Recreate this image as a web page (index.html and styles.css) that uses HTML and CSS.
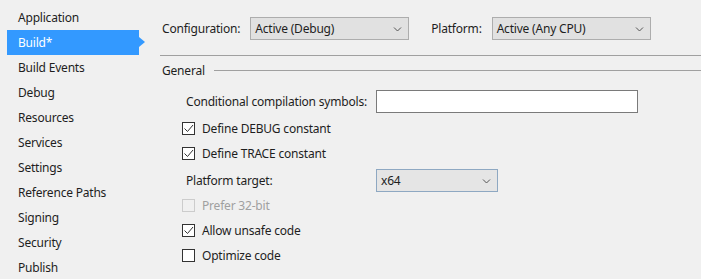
FILE: index.html
```html
<!DOCTYPE html>
<html lang="en">
<head>
    <meta charset="UTF-8">
    <title>Build</title>
    <link rel="stylesheet" href="styles.css">
</head>
<body>

<div class="page">
    <ul class="nav">
        <li>Application</li>
        <li class="active">Build*</li>
        <li>Build Events</li>
        <li>Debug</li>
        <li>Resources</li>
        <li>Services</li>
        <li>Settings</li>
        <li>Reference Paths</li>
        <li>Signing</li>
        <li>Security</li>
        <li>Publish</li>
    </ul>

    <div class="main">
        <div class="top-row">
            <span class="top-label">Configuration:</span>
            <div class="combo">
                <span>Active (Debug)</span>
                <svg class="chev" width="9" height="5" viewBox="0 0 9 5"><path d="M1 0.5 L4.5 4 L8 0.5" fill="none" stroke="#555" stroke-width="1"/></svg>
            </div>
            <span class="top-label platform-label">Platform:</span>
            <div class="combo">
                <span>Active (Any CPU)</span>
                <svg class="chev" width="9" height="5" viewBox="0 0 9 5"><path d="M1 0.5 L4.5 4 L8 0.5" fill="none" stroke="#555" stroke-width="1"/></svg>
            </div>
        </div>

        <div class="rule"></div>

        <div class="group-title">
            <span>General</span>
            <div class="group-line"></div>
        </div>

        <div class="row row-wide">
            <span class="field-label">Conditional compilation symbols:</span>
            <div class="textbox"></div>
        </div>

        <div class="row">
            <span class="check"><svg width="11" height="11" viewBox="0 0 11 11"><path d="M1.5 5.5 L4.5 8.5 L10 2" fill="none" stroke="#333" stroke-width="1"/></svg></span>
            <span>Define DEBUG constant</span>
        </div>
        <div class="row">
            <span class="check"><svg width="11" height="11" viewBox="0 0 11 11"><path d="M1.5 5.5 L4.5 8.5 L10 2" fill="none" stroke="#333" stroke-width="1"/></svg></span>
            <span>Define TRACE constant</span>
        </div>

        <div class="row row-wide">
            <span class="field-label">Platform target:</span>
            <div class="combo combo-target">
                <span>x64</span>
                <svg class="chev" width="9" height="5" viewBox="0 0 9 5"><path d="M1 0.5 L4.5 4 L8 0.5" fill="none" stroke="#555" stroke-width="1"/></svg>
            </div>
        </div>

        <div class="row disabled">
            <span class="check"></span>
            <span>Prefer 32-bit</span>
        </div>
        <div class="row">
            <span class="check"><svg width="11" height="11" viewBox="0 0 11 11"><path d="M1.5 5.5 L4.5 8.5 L10 2" fill="none" stroke="#333" stroke-width="1"/></svg></span>
            <span>Allow unsafe code</span>
        </div>
        <div class="row">
            <span class="check"></span>
            <span>Optimize code</span>
        </div>
    </div>
</div>

</body>
</html>
```

FILE: styles.css
```css
body {
    margin: 0;
    padding: 0;
    background-color: #f0f0f0;
    font-family: "Noto Sans", sans-serif;
    font-size: 12px;
    letter-spacing: -0.2px;
    color: #1e1e1e;
    overflow: hidden;
}

.page {
    display: flex;
}

.nav {
    list-style: none;
    margin: 5px 0 0 7px;
    padding: 0;
    width: 132px;
    flex-shrink: 0;
}

.nav li {
    height: 25px;
    line-height: 25px;
    padding-left: 11px;
    position: relative;
}

.nav li.active {
    background-color: #3399ff;
    color: white;
}

.nav li.active::after {
    content: "";
    position: absolute;
    right: -6px;
    top: 7px;
    border-left: 6px solid #3399ff;
    border-top: 5px solid transparent;
    border-bottom: 5px solid transparent;
}

.main {
    flex: 1;
    margin-left: 21px;
    padding-top: 17px;
}

.top-row {
    display: flex;
    align-items: center;
    height: 23px;
    padding-left: 2px;
}

.top-label {
    margin-right: 10px;
}

.platform-label {
    margin-left: 22px;
}

.combo {
    width: 147px;
    height: 21px;
    border: 1px solid #adadad;
    background-color: #e1e1e1;
    display: flex;
    align-items: center;
    justify-content: space-between;
    padding: 0 6px 0 4px;
}

.combo-target {
    width: 110px;
    border-color: #8ea8c2;
    background-color: #e5e5e5;
}

.chev {
    margin-top: 1px;
}

.rule {
    height: 1px;
    background-color: #a0a0a0;
    margin-top: 15px;
}

.group-title {
    display: flex;
    align-items: center;
    height: 29px;
    padding-left: 2px;
    margin-bottom: 4px;
}

.group-line {
    flex: 1;
    height: 1px;
    background-color: #a0a0a0;
    margin-left: 9px;
}

.row {
    display: flex;
    align-items: center;
    height: 25px;
    padding-left: 22px;
}

.row-wide {
    padding-left: 26px;
    margin-bottom: 2px;
}

.row + .row-wide {
    margin-top: 2px;
    margin-bottom: 0;
}

.field-label {
    width: 190px;
    flex-shrink: 0;
}

.textbox {
    width: 260px;
    height: 21px;
    border: 1px solid #7a7a7a;
    background-color: white;
}

.check {
    width: 11px;
    height: 11px;
    border: 1px solid #333;
    background-color: white;
    margin-right: 7px;
    display: flex;
}

.disabled {
    color: #a0a0a0;
}

.disabled .check {
    border-color: #cccccc;
    background-color: #f0f0f0;
}
```
